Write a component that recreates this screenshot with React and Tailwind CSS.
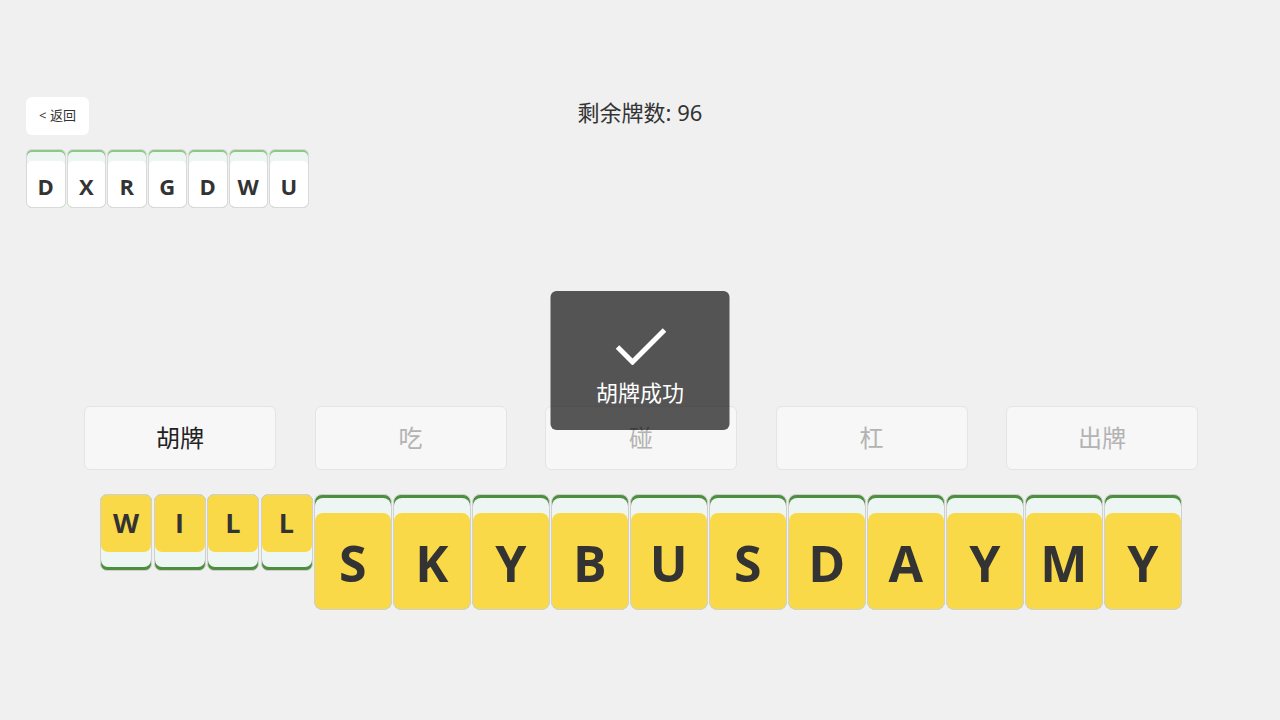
const topTiles = ['D', 'X', 'R', 'G', 'D', 'W', 'U'];
const meldTiles = ['W', 'I', 'L', 'L'];
const handTiles = ['S', 'K', 'Y', 'B', 'U', 'S', 'D', 'A', 'Y', 'M', 'Y'];
const actions = [
    { label: '胡牌', active: true },
    { label: '吃' },
    { label: '碰' },
    { label: '杠' },
    { label: '出牌' },
];

const latin = { fontFamily: '"Open Sans", "Noto Sans", sans-serif' };
const cjk = { fontFamily: '"Noto Sans", "Noto Sans CJK SC", sans-serif' };

// table tile, white face, thin light green edge on top
const SmallTile = ({ letter }) => (
    <div className="w-[39.5px] h-[59px] rounded-[6px] border border-[#d9d9d9] overflow-hidden bg-[#8cc886] flex flex-col">
        <div className="mt-[2px] flex-1 bg-[#eef6f4] rounded-t-[5px] flex flex-col">
            <div className="h-[9px]" />
            <div className="flex-1 bg-white rounded-t-[5px] flex items-center justify-center pt-[4px]">
                <span className="text-[22px] font-bold text-[#333]" style={latin}>{letter}</span>
            </div>
        </div>
    </div>
);

// melded tile, yellow face on top, green edge at the bottom
const MeldTile = ({ letter }) => (
    <div className="w-[52px] h-[77px] rounded-[7px] border border-[#d0d0d0] overflow-hidden bg-[#4e8f3f] flex flex-col">
        <div className="mb-[3px] flex-1 bg-[#eef6f4] rounded-b-[7px] flex flex-col">
            <div className="h-[57px] bg-[#f9d948] rounded-b-[7px] flex items-center justify-center">
                <span className="text-[27px] font-bold text-[#333]" style={latin}>{letter}</span>
            </div>
        </div>
    </div>
);

const HandTile = ({ letter }) => (
    <div className="w-[77.5px] h-[116px] rounded-[8px] border border-[#d0d0d0] overflow-hidden bg-[#4e8f3f] flex flex-col">
        <div className="mt-[3px] flex-1 bg-[#eef6f4] rounded-t-[8px] flex flex-col">
            <div className="h-[15px]" />
            <div className="flex-1 bg-[#f9d948] rounded-t-[8px] flex items-center justify-center pt-[4px]">
                <span className="text-[50px] font-bold text-[#333] leading-none" style={latin}>{letter}</span>
            </div>
        </div>
    </div>
);

export default function App() {
    return (
        <div className="relative w-full h-[720px] bg-[#f0f0f0] overflow-hidden" style={cjk}>
            <div className="px-[26px] pt-[97px] grid grid-cols-[1fr_auto_1fr] items-start">
                <button className="w-[63px] h-[38px] bg-white rounded-[6px] flex items-center justify-center text-[13px] text-[#333]">
                    &lt; 返回
                </button>
                <div className="text-[22px] leading-[30px] text-[#333]">剩余牌数: 96</div>
                <div />
            </div>

            <div className="ml-[26px] mt-[14px] flex gap-[1px]">
                {topTiles.map((t, i) => <SmallTile key={i} letter={t} />)}
            </div>

            <div className="ml-[84px] mt-[198px] w-[1114px] flex justify-between">
                {actions.map((a) => (
                    <button
                        key={a.label}
                        className={`w-[192px] h-[64px] rounded-[6px] border border-[#e4e4e4] bg-[#f7f7f7] text-[24px] flex items-center justify-center ${a.active ? 'text-[#222]' : 'text-[#b3b3b3]'}`}
                    >
                        {a.label}
                    </button>
                ))}
            </div>

            <div className="ml-[100px] mt-[24px] flex items-start gap-[1.5px]">
                {meldTiles.map((t, i) => <MeldTile key={i} letter={t} />)}
                {handTiles.map((t, i) => <HandTile key={i} letter={t} />)}
            </div>

            {/* toast */}
            <div className="absolute left-1/2 -translate-x-1/2 top-[291px] w-[179px] h-[139px] rounded-[6px] bg-black/65 flex flex-col items-center pt-[36px]">
                <svg width="52" height="38" viewBox="0 0 52 38" fill="none">
                    <polyline points="3,20 18,35 50,3" stroke="white" strokeWidth="5" strokeLinejoin="miter" />
                </svg>
                <div className="mt-[12px] text-[22px] leading-[30px] text-white">胡牌成功</div>
            </div>
        </div>
    );
}
